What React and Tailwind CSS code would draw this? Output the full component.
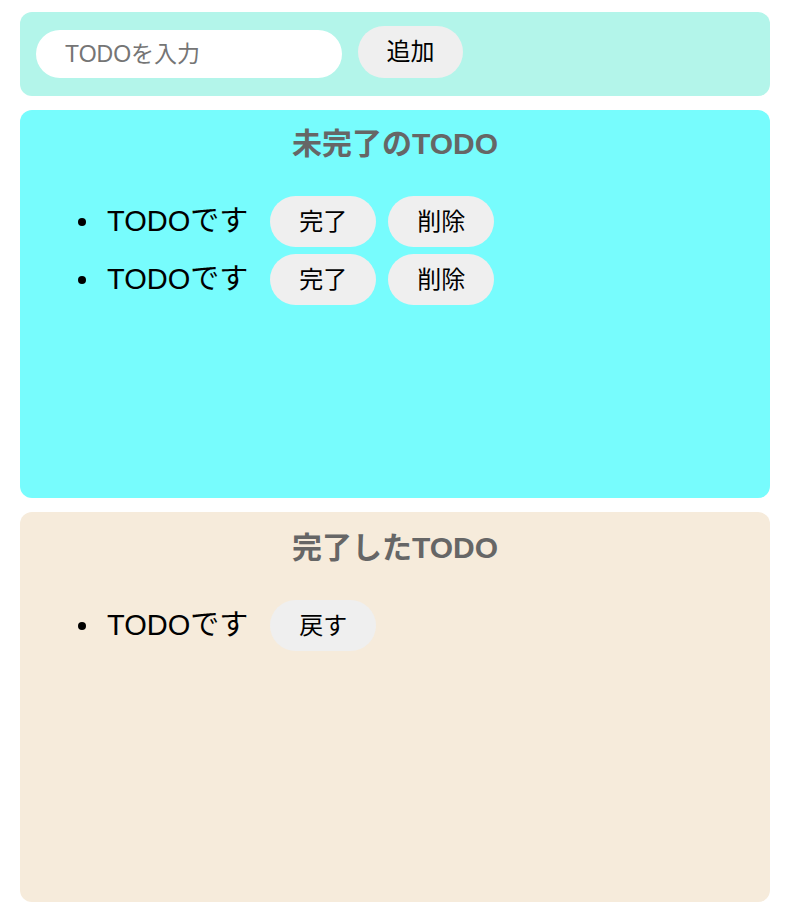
import { useState } from "react";

const font = {
    fontFamily:
        '"Liberation Sans", "Noto Sans CJK JP", sans-serif',
};

function PillButton({ children, onClick }) {
    return (
        <button
            type="button"
            onClick={onClick}
            className="h-[51px] px-[29px] rounded-full bg-[#efefef] text-[24px] leading-none text-black hover:bg-[#ff7fff] hover:text-white"
        >
            {children}
        </button>
    );
}

function Row({ text, children }) {
    return (
        <li className="flex items-center h-[51px] mb-[7px]">
            <span className="ml-[58px] w-[8px] h-[8px] rounded-full bg-black" />
            <span className="ml-[21px] mr-[22px] text-[29px] text-black">
                {text}
            </span>
            <div className="flex gap-[12px]">{children}</div>
        </li>
    );
}

export default function App() {
    const [todoText, setTodoText] = useState("");
    const [incompleteTodos, setIncompleteTodos] = useState([
        "TODOです",
        "TODOです",
    ]);
    const [completeTodos, setCompleteTodos] = useState(["TODOです"]);

    const onClickAdd = () => {
        if (todoText === "") return;
        setIncompleteTodos([...incompleteTodos, todoText]);
        setTodoText("");
    };

    const onClickDelete = (index) => {
        const next = [...incompleteTodos];
        next.splice(index, 1);
        setIncompleteTodos(next);
    };

    const onClickComplete = (index) => {
        const next = [...incompleteTodos];
        next.splice(index, 1);
        setIncompleteTodos(next);
        setCompleteTodos([...completeTodos, incompleteTodos[index]]);
    };

    const onClickBack = (index) => {
        const next = [...completeTodos];
        next.splice(index, 1);
        setCompleteTodos(next);
        setIncompleteTodos([...incompleteTodos, completeTodos[index]]);
    };

    return (
        <div style={font} className="bg-white min-h-[914px] pt-[12px] pl-[20px]">
            {/* Input area */}
            <div className="w-[750px] h-[84px] flex items-end gap-[16px] px-[16px] pb-[18px] rounded-[12px] bg-[#b3f5ea]">
                <input
                    type="text"
                    value={todoText}
                    onChange={(e) => setTodoText(e.target.value)}
                    placeholder="TODOを入力"
                    className="w-[306px] h-[48px] px-[29px] rounded-full bg-white text-[23px] text-black placeholder:text-[#757575] outline-none"
                />
                <button
                    type="button"
                    onClick={onClickAdd}
                    className="w-[105px] h-[52px] rounded-full bg-[#efefef] text-[24px] leading-none text-black hover:bg-[#ff7fff] hover:text-white"
                >
                    追加
                </button>
            </div>

            {/* Incomplete */}
            <div className="w-[750px] h-[388px] mt-[14px] pt-[17px] rounded-[12px] bg-[#77fcfd]">
                <p className="text-center text-[30px] leading-[34px] font-bold text-[#666666]">
                    未完了のTODO
                </p>
                <ul className="mt-[35px]">
                    {incompleteTodos.map((todo, index) => (
                        <Row key={index} text={todo}>
                            <PillButton onClick={() => onClickComplete(index)}>
                                完了
                            </PillButton>
                            <PillButton onClick={() => onClickDelete(index)}>
                                削除
                            </PillButton>
                        </Row>
                    ))}
                </ul>
            </div>

            {/* Complete */}
            <div className="w-[750px] h-[390px] mt-[14px] pt-[19px] rounded-[12px] bg-[#f6ebdb]">
                <p className="text-center text-[30px] leading-[34px] font-bold text-[#666666]">
                    完了したTODO
                </p>
                <ul className="mt-[35px]">
                    {completeTodos.map((todo, index) => (
                        <Row key={index} text={todo}>
                            <PillButton onClick={() => onClickBack(index)}>
                                戻す
                            </PillButton>
                        </Row>
                    ))}
                </ul>
            </div>
        </div>
    );
}
